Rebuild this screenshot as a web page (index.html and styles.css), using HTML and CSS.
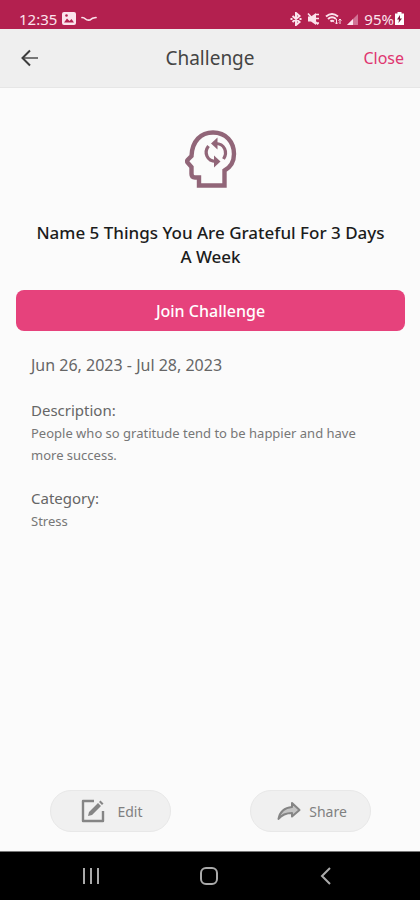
FILE: index.html
```html
<!DOCTYPE html>
<html lang="en">
<head>
<meta charset="utf-8">
<meta name="viewport" content="width=device-width, initial-scale=1">
<title>Challenge</title>
<link rel="stylesheet" href="styles.css">
</head>
<body>
<div class="screen">
  <div class="status">
    <span class="status-text">12:35</span>
    <svg class="photo" width="14" height="13" viewBox="0 0 14 13"><rect width="14" height="13" rx="2" fill="#fbe3ec"/><path d="M2 10.500l3-4 2.500 2.500 2-2 2.500 3.500z" fill="#b3204f"/><circle cx="4.500" cy="3.500" r="1.300" fill="#b3204f"/></svg>
    <svg width="16" height="6" viewBox="0 0 16 6"><path d="M1 1.500Q3 1.500 4.500 3T9 4Q11 1.800 15 1.500" fill="none" stroke="#fbe3ec" stroke-width="1.700" stroke-linecap="round"/></svg>
    <div class="signals">
      <svg width="12" height="14" viewBox="0 0 12 14"><path d="M2.500 4l7 6L6 13V1l3.500 3-7 6M0.500 7h2M9.500 7h2" fill="none" stroke="#fbe3ec" stroke-width="2"/></svg>
      <svg width="13" height="14" viewBox="0 0 13 14"><path d="M1 4.500h3l5-3.500v12L4 9.500H1z" fill="#fbe3ec"/><path d="M1 1.500l10 11M9 2.500h3M9 6.500h3M9 11h3" stroke="#fbe3ec" stroke-width="1.600"/></svg>
      <svg width="17" height="14" viewBox="0 0 17 14"><path d="M1 4.500Q7-.5 13 4.500M3 7Q7 3.500 11 7M5.500 9.500Q7 8 9 9.500" fill="none" stroke="#fbe3ec" stroke-width="2"/><path d="M11.500 7v5M10 10.500l1.500 1.500L13 10.500M15 12V7M13.500 8.500L15 7l1.500 1.500" fill="none" stroke="#fbe3ec"/></svg>
      <svg width="12" height="14" viewBox="0 0 12 14"><path d="M0 13L11 2v11z" fill="#d27395"/><path d="M0 13l6-6v6z" fill="#fbe3ec"/></svg>
      <span class="status-text">95%</span>
      <svg class="battery" width="9" height="13" viewBox="0 0 9 13"><path d="M2.500 0h4v1.500H9V13H0V1.500h2.500z" fill="#fff"/><path d="M5 3L2 7.500h2L3.500 11 7 6.500H5z" fill="#7d1739"/></svg>
    </div>
  </div>
  <header class="header">
    <button class="back" aria-label="Back"><svg width="18" height="18" viewBox="0 0 18 18"><path d="M17 9H2" stroke="#777" stroke-width="2"/><path d="M9 1.500L1.500 9 9 16.500" fill="none" stroke="#3d3d3d" stroke-width="2"/></svg></button>
    <h1 class="heading">Challenge</h1>
    <button class="close">Close</button>
  </header>
  <main class="content">
    <svg class="head" width="52" height="58" viewBox="0 0 52 58"><path d="M14 55.500V47.500H10Q6.500 47.500 6.500 44V37L2.500 32.500Q1.500 31 3 29.500L6.500 26C7 11 16 2.500 28 2.500C41 2.500 49 12 49 24C49 32 45 37.500 39.500 40.500V55.500Z" fill="none" stroke="#916578" stroke-width="4.400"/><path d="M23.500 16C18.500 22.500 22 31.500 31 31.500" fill="none" stroke="#916578" stroke-width="3.200"/><path d="M29 25.500l6.500 6-6.500 6z" fill="#916578"/><path d="M38.500 29C43 22 39.500 13.500 30.500 13.500" fill="none" stroke="#916578" stroke-width="3.200"/><path d="M32.500 7.500l-6.500 6 6.500 6z" fill="#916578"/></svg>
    <h2 class="title">Name 5 Things You Are Grateful For 3 Days A Week</h2>
    <button class="join">Join Challenge</button>
    <div class="details">
      <p class="label date">Jun 26, 2023 - Jul 28, 2023</p>
      <section class="group"><h3 class="label">Description:</h3><p class="text">People who so gratitude tend to be happier and have more success.</p></section>
      <section class="group"><h3 class="label">Category:</h3><p class="text">Stress</p></section>
    </div>
  </main>
  <div class="actions">
    <button class="pill"><svg width="24" height="24" viewBox="0 0 24 24"><path d="M13 2H2V22H22V12" fill="none" stroke="#858585" stroke-width="2.400" stroke-linejoin="round"/><path d="M7 17l1-4L17 4l3 3-9 9zM18 3l1.500-1.500 3 3L21 6z" fill="#858585"/></svg><span>Edit</span></button>
    <button class="pill share"><svg width="24" height="20" viewBox="0 0 24 20"><path d="M1.500 18C3 10 8 6.500 15 6V2l7.500 7-7.500 6.500V12C9 12 5 13.500 1.500 18z" fill="#c4c4c4" stroke="#858585" stroke-width="2" stroke-linejoin="round"/></svg><span>Share</span></button>
  </div>
  <nav class="nav">
    <button aria-label="Recent apps"><svg width="18" height="18" viewBox="0 0 18 18"><path d="M2 1v16M9 1v16M16 1v16" stroke="#aaa" stroke-width="2"/></svg></button>
    <button aria-label="Home"><svg width="18" height="18" viewBox="0 0 18 18"><rect x="1" y="1" width="16" height="16" rx="5" fill="none" stroke="#aaa" stroke-width="2"/></svg></button>
    <button aria-label="Back"><svg width="18" height="18" viewBox="0 0 18 18"><path d="M13 1L5 9l8 8" fill="none" stroke="#aaa" stroke-width="2"/></svg></button>
  </nav>
</div>
</body>
</html>
```
FILE: styles.css
```css
* { box-sizing: border-box; }
body { margin: 0; font-family: "Noto Sans", sans-serif; background: #fbfbfb; color: #555; }
button { border: 0; padding: 0; background: none; font: inherit; color: inherit; }
svg { display: block; flex: none; }
h1, h2, h3, p { margin: 0; font-weight: 400; }
.screen { min-height: 100vh; display: flex; flex-direction: column; }
.status { height: 29px; padding: 8px 16px 0 19px; display: flex; align-items: center; gap: 5px; background: #b3204f; color: #fbe3ec; }
.status-text { font-size: 15px; line-height: 20px; }
.signals { margin-left: auto; display: flex; align-items: center; gap: 5px; }
.battery { margin-left: -4px; }
.header { height: 59px; padding: 0 16px; display: grid; grid-template-columns: 1fr auto 1fr; align-items: center; background: #efefef; border-bottom: 1px solid #e6e6e6; }
.back { justify-self: start; padding-left: 5px; }
.heading { font-size: 19px; line-height: 26px; color: #444; }
.close { justify-self: end; font-size: 16px; color: #df3670; }
.content { flex: 1; padding: 42px 15px 0 16px; display: flex; flex-direction: column; }
.head { align-self: center; }
.title { margin-top: 33px; padding: 0 16px; font-size: 17px; line-height: 24px; font-weight: 500; color: #1c1c1c; text-align: center; }
.join { margin-top: 21px; height: 41px; border-radius: 8px; background: #e6427c; color: #fff; font-size: 16px; font-weight: 500; }
.details { padding: 23px 15px 0; }
.label { font-size: 15px; line-height: 22px; color: #666; }
.date { font-size: 16px; }
.group { margin-top: 23px; }
.group + .group { margin-top: 21px; }
.text { margin-top: 1px; font-size: 13px; line-height: 22px; color: #777; }
.actions { display: flex; justify-content: space-around; padding: 0 10px 19px; }
.pill { width: 121px; height: 42px; padding-left: 4px; border-radius: 21px; border: 1px solid #e8e8e8; background: #f0f0f0; display: flex; align-items: center; justify-content: center; gap: 12px; font-size: 14px; color: #808080; }
.share { gap: 8px; }
.nav { height: 49px; padding: 0 35px 0 32px; display: flex; background: #000; border-top: 1px solid #777; }
.nav button { flex: 1; display: flex; align-items: center; justify-content: center; }
```
